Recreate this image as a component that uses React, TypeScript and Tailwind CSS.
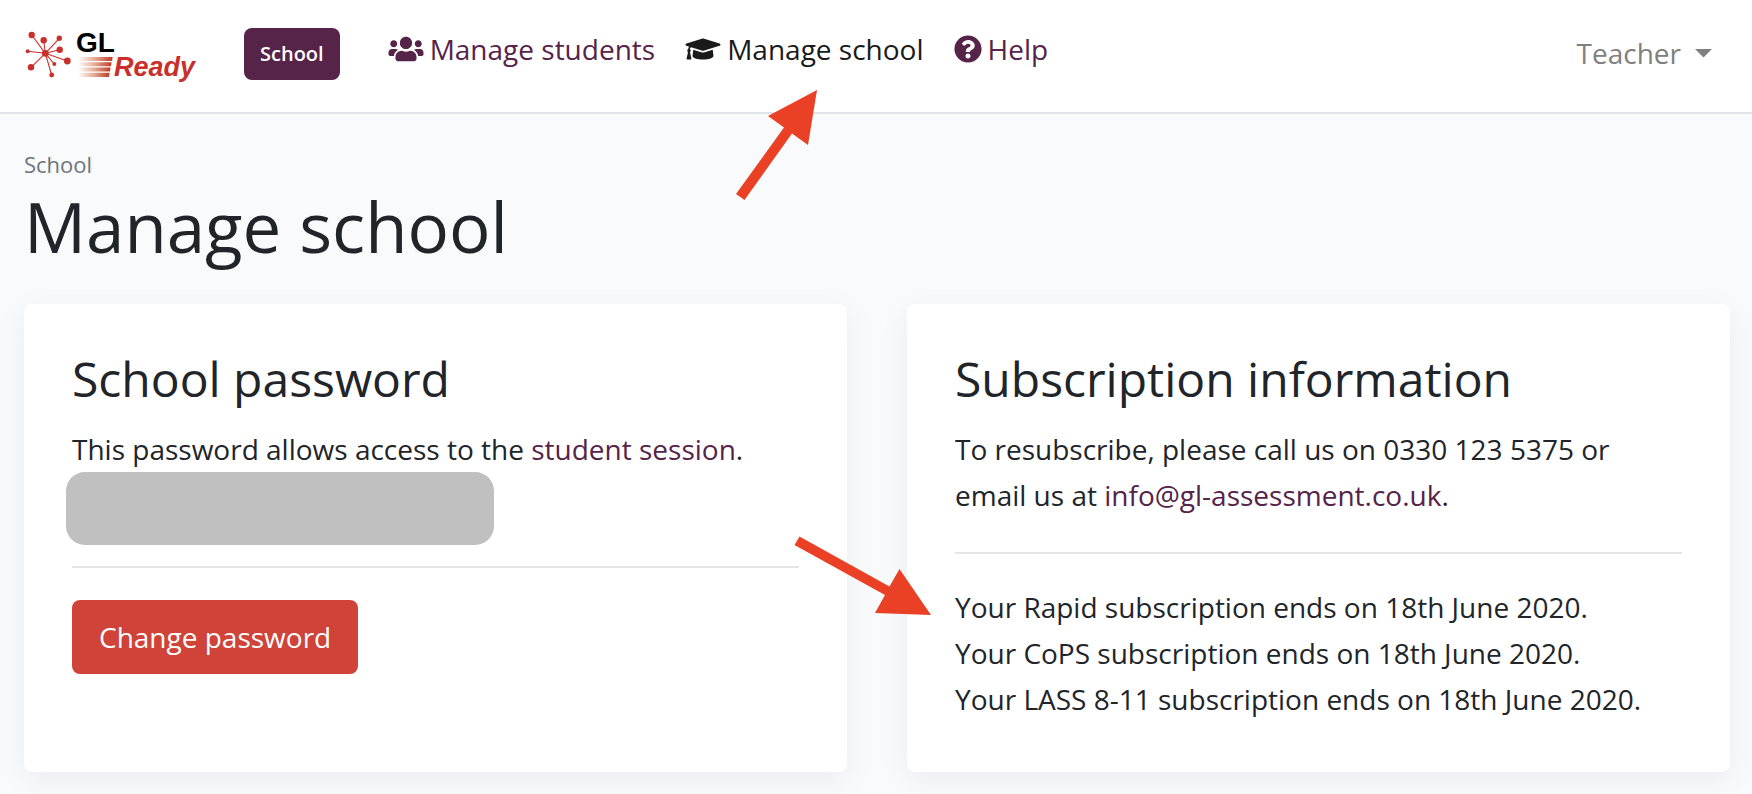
import type { ReactNode } from 'react';
import { FaUsers, FaGraduationCap, FaQuestionCircle } from 'react-icons/fa';

const NODES: [number, number, number][] = [
  [7.7, 9, 3.2],
  [19.7, 14.3, 3.2],
  [35.3, 12.3, 2.7],
  [3.7, 25.3, 2],
  [35.7, 23.7, 3.2],
  [43.3, 35, 3.4],
  [30.3, 38, 2],
  [7, 41.3, 3.2],
  [27.7, 49, 2.4],
];

function Logo() {
  return (
    <svg width="176" height="60" viewBox="0 0 176 60" role="img" aria-label="GL Ready" className="shrink-0">
      <defs>
        <linearGradient id="speed" x1="0" x2="1">
          <stop offset="0" stopColor="#ffffff" />
          <stop offset="0.5" stopColor="#e3ab93" />
          <stop offset="1" stopColor="#c03a26" />
        </linearGradient>
      </defs>
      <g fill="#c9302c" stroke="#c9302c">
        {NODES.map(([x, y, r]) => (
          <g key={`${x}-${y}`}>
            <line x1="21.3" y1="27.3" x2={x} y2={y} strokeWidth="1.1" />
            <circle cx={x} cy={y} r={r} stroke="none" />
          </g>
        ))}
        <circle cx="21.3" cy="27.3" r="3.4" stroke="none" />
      </g>
      <g fill="url(#speed)">
        <path d="M54 31H88.7L88 35H54Z" />
        <path d="M54 36.2H87.6L86.9 40.2H54Z" />
        <path d="M54 41.4H86.6L85.9 45.6H54Z" />
        <path d="M54 46.8H85.6L84.9 51H54Z" />
      </g>
      <text x="52" y="26" fontSize="28" fontWeight="700" fill="#000" fontFamily="Liberation Sans, Arial, sans-serif">
        GL
      </text>
      <text x="90" y="50" fontSize="27" fontWeight="700" fontStyle="italic" fill="#c9302c" fontFamily="Liberation Sans, Arial, sans-serif">
        Ready
      </text>
    </svg>
  );
}

function NavLink({ icon, label, current = false }: { icon: ReactNode; label: string; current?: boolean }) {
  return (
    <a
      href="#"
      aria-current={current ? 'page' : undefined}
      className={`flex items-center gap-1.5 whitespace-nowrap ${current ? 'text-[#1a1a1a]' : 'text-[#562349]'}`}
    >
      {icon}
      {label}
    </a>
  );
}

function Card({ title, children }: { title: string; children: ReactNode }) {
  return (
    <section className="rounded-lg bg-white px-12 pt-12 pb-[50px] shadow-[0_8px_32px_rgba(0,0,0,0.06)]">
      <h2 className="mb-5 text-5xl leading-[54px]">{title}</h2>
      {children}
    </section>
  );
}

const SUBSCRIPTIONS = ['Rapid', 'CoPS', 'LASS 8-11'];

export default function App() {
  return (
    <div className="relative min-h-screen bg-[#f8fafc] font-['Open_Sans',sans-serif] text-[28px] leading-[46px] text-[#212529]">
      <header className="flex h-[114px] items-center border-b-2 border-[#dee2e9] bg-white pr-10 pl-6">
        <a href="#">
          <Logo />
        </a>
        <a href="#" className="mr-12 mb-1 ml-11 rounded-lg bg-[#562349] px-4 py-2 text-xl leading-9 font-semibold text-white">
          School
        </a>
        <nav className="flex gap-[30px] pb-3.5">
          <NavLink icon={<FaUsers className="h-7 w-9" />} label="Manage students" />
          <NavLink icon={<FaGraduationCap className="h-7 w-9" />} label="Manage school" current />
          <NavLink icon={<FaQuestionCircle className="size-7" />} label="Help" />
        </nav>
        <button type="button" className="ml-auto flex items-center gap-3.5 pb-1.5 text-[#808080]">
          Teacher
          <svg width="17" height="9" viewBox="0 0 17 9" aria-hidden="true">
            <path d="M0 0H17L8.5 8.5Z" fill="currentColor" />
          </svg>
        </button>
      </header>

      <main className="pt-8 pr-[22px] pl-6">
        <p className="text-[22px] leading-9 text-[#6c757d]">School</p>
        <h1 className="mb-[34px] text-[69px] leading-[88px]">Manage school</h1>

        <div className="grid grid-cols-2 gap-15">
          <Card title="School password">
            <p>
              This password allows access to the{' '}
              <a href="#" className="text-[#562349]">
                student session
              </a>
              .
            </p>
            <div className="-ml-1.5 h-[73px] w-[428px] rounded-[19px] bg-[#c0c0c0]" />
            <hr className="mt-[21px] mb-8 border-t-2 border-[#e5e5e5]" />
            <button type="button" className="rounded-lg bg-[#d04338] px-[27px] py-3.5 text-white">
              Change password
            </button>
          </Card>

          <Card title="Subscription information">
            <p>
              To resubscribe, please call us on 0330 123 5375 or
              <br />
              email us at{' '}
              <a href="#" className="text-[#562349]">
                info@gl-assessment.co.uk
              </a>
              .
            </p>
            <hr className="mt-[34px] mb-[30px] border-t-2 border-[#e5e5e5]" />
            <ul>
              {SUBSCRIPTIONS.map((name) => (
                <li key={name}>Your {name} subscription ends on 18th June 2020.</li>
              ))}
            </ul>
          </Card>
        </div>
      </main>

      <svg width="82" height="112" viewBox="0 0 82 112" aria-hidden="true" className="absolute top-[89px] left-[736px]">
        <path d="M81 1L32 27L48 38.5L0 105L8.5 111L56 44.5L72 56Z" fill="#ea4025" />
      </svg>
      <svg width="138" height="80" viewBox="0 0 138 80" aria-hidden="true" className="absolute top-[536px] left-[794px]">
        <path d="M137 79L105.5 33L95.5 50.5L5.5 0.5L0.5 9L91 59L81 77Z" fill="#ea4025" />
      </svg>
    </div>
  );
}
